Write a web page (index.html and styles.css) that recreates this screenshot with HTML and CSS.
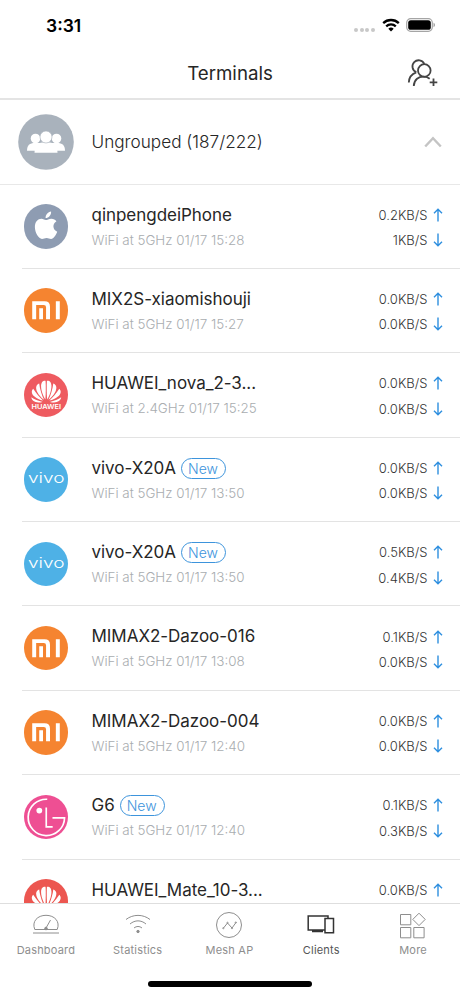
FILE: index.html
```html
<!DOCTYPE html>
<html lang="en">

<head>
    <meta charset="UTF-8">
    <meta name="viewport" content="width=device-width, initial-scale=1.0">
    <title>Terminals</title>
    <link rel="stylesheet" href="styles.css">
</head>

<body>
    <!-- shared icons -->
    <svg class="sprite" width="0" height="0">
        <symbol id="apple" viewBox="0 0 45 45">
            <path d="M22 16.300c1.500 0 3-1.500 5.700-1.500 2.200 0 4 1.100 5.100 2.700-4.500 2.700-3.800 8.700.8 10.500-1.300 3.400-3.600 7.300-6.200 7.300-1.800 0-2.500-1-4.500-1s-3 1-4.700 1c-3.400 0-7.200-6.500-7.200-12 0-5.200 3.100-8.300 6.600-8.300 2 0 3.300 1.300 4.400 1.300z" />
            <path d="M21.800 14.200c-.2-3.200 2.300-6.300 5.600-6.700.3 3.500-2.400 6.600-5.600 6.700z" />
        </symbol>
        <symbol id="mi" viewBox="0 0 45 45">
            <path d="M8.300 13.500h12.500q5.500 0 5.500 5.500v12.700h-4V19.500q0-2.300-2.300-2.300H12.300v14.500h-4z" />
            <path d="M15.400 20.500h3.800v11.200h-3.800zM32.200 13.500h4v18.200h-4z" />
        </symbol>
        <symbol id="huawei" viewBox="0 0 45 45">
            <g id="petals">
                <path d="M21.600 26.800C17.800 20.500 16 12.500 18.200 9.300c1-1.200 2.700-1.700 3.600-1.300.3 3 .3 13-.2 18.800z" />
                <path d="M20.300 27.100C14.500 22.500 11 16.500 12.700 12.800c.6-1.200 1.800-1.900 2.700-2.200.6 5.500 2.600 12 4.900 16.500z" />
                <path d="M19.300 27.900C12.500 26 7.700 22.500 7.900 18.900c0-1.300.8-2.400 1.400-3C12.200 20.500 16 24.800 19.300 27.900z" />
                <path d="M18.800 29.200c-6.500 1.600-10.700-.4-11.400-4.600C10.300 26.500 14.500 28.300 18.800 29.200z" />
            </g>
            <use href="#petals" transform="matrix(-1 0 0 1 45 0)" />
        </symbol>
        <symbol id="lg" viewBox="0 0 45 45">
            <circle cx="15.500" cy="15.800" r="2.900" />
            <path class="line" d="M23.500 4.300A18.400 18.400 0 1 0 41 23.200H28.800M22.500 12.700v19.500h6.500" />
        </symbol>
        <symbol id="up" viewBox="0 0 10 14">
            <path d="M5 13.500V1.200M1 5.200l4-4 4 4" />
        </symbol>
        <symbol id="down" viewBox="0 0 10 14">
            <path d="M5 .5v12.300M1 8.800l4 4 4-4" />
        </symbol>
    </svg>

    <div class="screen">
        <div class="status-bar">
            <span class="time">3:31</span>
            <div class="status-icons">
                <div class="signal"><i></i><i></i><i></i><i></i></div>
                <svg class="wifi" width="18" height="14" viewBox="0 0 18 14">
                    <path d="M1.200 5.100a11.300 11.300 0 0 1 15.600 0M4.200 8.300a7 7 0 0 1 9.600 0" />
                    <path class="dot" d="M9 13.500l-2.700-2.700a3.900 3.900 0 0 1 5.400 0z" />
                </svg>
                <svg width="30" height="14" viewBox="0 0 30 14">
                    <rect x=".7" y=".7" width="25.600" height="12.600" rx="4" fill="none" stroke="#a5a5a5" stroke-width="1.200" />
                    <rect x="2.200" y="2.200" width="22.600" height="9.600" rx="2.600" />
                    <path d="M27.500 4.800c2 .7 2 3.700 0 4.400z" fill="#a5a5a5" />
                </svg>
            </div>
        </div>

        <div class="header">
            <h1>Terminals</h1>
            <svg class="add-user" width="32" height="30" viewBox="0 0 32 30">
                <circle cx="17.300" cy="12.500" r="6.300" />
                <path d="M9.300 14.200A6.200 6.200 0 1 1 17.300 5.900M1.800 24.500c.1-4.500 2.800-8.500 7.500-10.200" />
                <path d="M6.800 28c.2-6.500 4.800-9.800 10.700-9.300 2.100.1 3.600.9 5.200 2.100M26.500 20.500v7.500M22.700 24.300h7.600" />
            </svg>
        </div>

        <div class="list">
            <div class="group">
                <svg class="group-icon" width="56" height="56" viewBox="0 0 56 56">
                    <circle cx="28" cy="28" r="27.800" fill="#a9b2bc" />
                    <g fill="#fff">
                        <circle cx="17.500" cy="24.500" r="4.800" />
                        <circle cx="38.500" cy="24.500" r="4.800" />
                        <path d="M9 36.800c0-5.500 2.500-7.800 8-7.800h22c5.500 0 8 2.300 8 7.800z" />
                        <path d="M16.500 38.800c0-7 3-10 8-10.300h7c5 .3 8 3.300 8 10.300z" />
                        <circle cx="28" cy="23" r="6" stroke="#a9b2bc" stroke-width=".6" />
                    </g>
                </svg>
                <span class="group-name">Ungrouped (187/222)</span>
                <svg class="chevron" width="18" height="12" viewBox="0 0 18 12">
                    <path d="M1.200 10.500L9 2.200l7.800 8.300" />
                </svg>
            </div>

            <div class="client">
                <svg class="logo apple"><use href="#apple" /></svg>
                <div class="info">
                    <div class="name">qinpengdeiPhone</div>
                    <div class="detail">WiFi at 5GHz 01/17 15:28</div>
                </div>
                <div class="speed">
                    <div>0.2KB/S <svg><use href="#up" /></svg></div>
                    <div>1KB/S <svg><use href="#down" /></svg></div>
                </div>
            </div>
            <div class="client">
                <svg class="logo mi"><use href="#mi" /></svg>
                <div class="info">
                    <div class="name">MIX2S-xiaomishouji</div>
                    <div class="detail">WiFi at 5GHz 01/17 15:27</div>
                </div>
                <div class="speed">
                    <div>0.0KB/S <svg><use href="#up" /></svg></div>
                    <div>0.0KB/S <svg><use href="#down" /></svg></div>
                </div>
            </div>
            <div class="client">
                <svg class="logo huawei" viewBox="0 0 45 45">
                    <use href="#huawei" />
                    <text x="7.500" y="36.700" textLength="30" lengthAdjust="spacingAndGlyphs">HUAWEI</text>
                </svg>
                <div class="info">
                    <div class="name">HUAWEI_nova_2-3...</div>
                    <div class="detail">WiFi at 2.4GHz 01/17 15:25</div>
                </div>
                <div class="speed">
                    <div>0.0KB/S <svg><use href="#up" /></svg></div>
                    <div>0.0KB/S <svg><use href="#down" /></svg></div>
                </div>
            </div>
            <div class="client">
                <svg class="logo vivo" viewBox="0 0 45 45">
                    <text x="4" y="26.500" textLength="37" lengthAdjust="spacingAndGlyphs">vivo</text>
                </svg>
                <div class="info">
                    <div class="name">vivo-X20A <span class="new">New</span></div>
                    <div class="detail">WiFi at 5GHz 01/17 13:50</div>
                </div>
                <div class="speed">
                    <div>0.0KB/S <svg><use href="#up" /></svg></div>
                    <div>0.0KB/S <svg><use href="#down" /></svg></div>
                </div>
            </div>
            <div class="client">
                <svg class="logo vivo" viewBox="0 0 45 45">
                    <text x="4" y="26.500" textLength="37" lengthAdjust="spacingAndGlyphs">vivo</text>
                </svg>
                <div class="info">
                    <div class="name">vivo-X20A <span class="new">New</span></div>
                    <div class="detail">WiFi at 5GHz 01/17 13:50</div>
                </div>
                <div class="speed">
                    <div>0.5KB/S <svg><use href="#up" /></svg></div>
                    <div>0.4KB/S <svg><use href="#down" /></svg></div>
                </div>
            </div>
            <div class="client">
                <svg class="logo mi"><use href="#mi" /></svg>
                <div class="info">
                    <div class="name">MIMAX2-Dazoo-016</div>
                    <div class="detail">WiFi at 5GHz 01/17 13:08</div>
                </div>
                <div class="speed">
                    <div>0.1KB/S <svg><use href="#up" /></svg></div>
                    <div>0.0KB/S <svg><use href="#down" /></svg></div>
                </div>
            </div>
            <div class="client">
                <svg class="logo mi"><use href="#mi" /></svg>
                <div class="info">
                    <div class="name">MIMAX2-Dazoo-004</div>
                    <div class="detail">WiFi at 5GHz 01/17 12:40</div>
                </div>
                <div class="speed">
                    <div>0.0KB/S <svg><use href="#up" /></svg></div>
                    <div>0.0KB/S <svg><use href="#down" /></svg></div>
                </div>
            </div>
            <div class="client">
                <svg class="logo lg"><use href="#lg" /></svg>
                <div class="info">
                    <div class="name">G6 <span class="new">New</span></div>
                    <div class="detail">WiFi at 5GHz 01/17 12:40</div>
                </div>
                <div class="speed">
                    <div>0.1KB/S <svg><use href="#up" /></svg></div>
                    <div>0.3KB/S <svg><use href="#down" /></svg></div>
                </div>
            </div>
            <div class="client">
                <svg class="logo huawei mate"><use href="#huawei" /></svg>
                <div class="info">
                    <div class="name">HUAWEI_Mate_10-3...</div>
                </div>
                <div class="speed">
                    <div>0.0KB/S <svg><use href="#up" /></svg></div>
                </div>
            </div>
        </div>

        <div class="tab-bar">
            <div class="tab">
                <svg width="28" height="28" viewBox="0 0 28 28">
                    <path d="M2.800 18.500C-.5 10.500 5.500 4.300 14 4.300s14.500 6.200 11.200 14.200zM1 22h26M14.300 16.500l4.200-7.500" />
                    <circle cx="14" cy="17.500" r="1.300" fill="#8e8e8e" />
                </svg>
                <span>Dashboard</span>
            </div>
            <div class="tab">
                <svg width="28" height="28" viewBox="0 0 28 28">
                    <path d="M2 8.500c7-5.500 17-5.500 24 0M6 13c5-4.200 11-4.200 16 0M10 17c2.500-2 5.500-2 8 0" />
                    <circle cx="14" cy="20.500" r="1.200" fill="#8e8e8e" />
                </svg>
                <span>Statistics</span>
            </div>
            <div class="tab">
                <svg width="28" height="28" viewBox="0 0 28 28">
                    <circle cx="14" cy="14" r="12.500" />
                    <path d="M8.500 17l4-5 4.500 5 4-5.500" />
                    <circle cx="8.300" cy="17.200" r=".6" />
                    <circle cx="12.500" cy="11.800" r=".6" />
                    <circle cx="17" cy="17.200" r=".6" />
                    <circle cx="20.800" cy="11.500" r=".6" />
                </svg>
                <span>Mesh AP</span>
            </div>
            <div class="tab active">
                <svg width="28" height="28" viewBox="0 0 28 28">
                    <path d="M21 7.500V5H1.200v14h16.300M5 20.600h11M18 7.500h8.500v14.200H18z" />
                </svg>
                <span>Clients</span>
            </div>
            <div class="tab">
                <svg width="28" height="28" viewBox="0 0 28 28">
                    <path d="M1.500 3.500h10.300v10.300H1.500zM1.500 16.500h10.300v10.300H1.500zM14.800 16.500h10.300v10.300H14.800zM20 2.200l6.200 6.200-6.200 6.200-6.200-6.200z" />
                </svg>
                <span>More</span>
            </div>
        </div>
        <div class="home-indicator"></div>
    </div>
</body>

</html>
```
FILE: styles.css
```css
* {
    box-sizing: border-box;
}

body {
    margin: 0;
    font-family: Inter, "Liberation Sans", sans-serif;
    background-color: #fff;
    color: #262626;
}

.sprite {
    display: block;
}

.screen {
    width: 460px;
    height: 996px;
    display: flex;
    flex-direction: column;
    overflow: hidden;
}

.status-bar {
    height: 49px;
    padding: 1px 24.5px 0 46px;
    display: flex;
    align-items: center;
    justify-content: space-between;
    flex-shrink: 0;
}

.time {
    font-size: 17.5px;
    font-weight: 600;
    color: #000;
}

.status-icons {
    display: flex;
    align-items: center;
}

.signal {
    display: flex;
    gap: 1.5px;
    margin: 9px 7px 0 0;
}

.signal i {
    width: 4px;
    height: 4px;
    border-radius: 50%;
    background-color: #c8c8c8;
}

.wifi {
    margin-right: 6px;
    fill: none;
    stroke: #000;
    stroke-width: 2.3;
}

.wifi .dot {
    fill: #000;
    stroke: none;
}

.header {
    height: 50.5px;
    flex-shrink: 0;
    border-bottom: 2px solid #e4e4e4;
    display: grid;
    grid-template-columns: 60px 1fr 60px;
    align-items: center;
}

.header h1 {
    grid-column: 2;
    margin: 0;
    font-size: 18.7px;
    font-weight: 400;
    text-align: center;
}

.add-user {
    margin-left: 7px;
    fill: none;
    stroke: #444;
    stroke-width: 1.8;
}

.list {
    flex: 1;
    min-height: 0;
    overflow: hidden;
}

.group {
    height: 85px;
    padding: 0 18px;
    display: flex;
    align-items: center;
    border-bottom: 1px solid #e8e8e8;
}

.group-icon {
    margin-right: 17.5px;
}

.group-name {
    flex: 1;
    font-size: 17.2px;
    font-weight: 300;
}

.chevron {
    fill: none;
    stroke: #c4c4c4;
    stroke-width: 2.4;
}

.client {
    height: 84.4px;
    margin-left: 22px;
    padding: 0 17.5px 0 1.5px;
    display: flex;
    border-bottom: 1px solid #e3e3e3;
}

.logo {
    width: 44.5px;
    height: 44.5px;
    margin: 19.5px 23.5px 0 0;
    border-radius: 50%;
    fill: #fff;
    flex-shrink: 0;
}

.apple {
    background-color: #8e9cb2;
}

.mi {
    background-color: #f58430;
}

.huawei {
    background-color: #ee5b60;
    font-size: 6.3px;
    font-weight: 600;
}

.huawei.mate {
    background-color: #ec5650;
}

.vivo {
    background-color: #4eb1e6;
    font-size: 14px;
    font-weight: 300;
}

.lg {
    background-color: #ee4f93;
}

.line {
    fill: none;
    stroke: #fff;
    stroke-width: 1.7;
}

.info {
    flex: 1;
    padding-top: 18px;
    white-space: nowrap;
}

.name {
    height: 25px;
    display: flex;
    align-items: center;
    font-size: 17px;
    letter-spacing: -0.03px;
    line-height: 25px;
}

.new {
    height: 21px;
    width: 45px;
    margin-left: 5.5px;
    border: 1.3px solid #3d94dc;
    border-radius: 11px;
    color: #3d94dc;
    font-size: 14px;
    font-weight: 300;
    line-height: 19px;
    text-align: center;
    text-indent: -2px;
}

.detail {
    font-size: 13.4px;
    font-weight: 300;
    line-height: 25px;
    color: #a9adb0;
}

.speed {
    padding-top: 17.5px;
    font-size: 13px;
    font-weight: 300;
    color: #333;
}

.speed div {
    height: 25.3px;
    display: flex;
    align-items: center;
    justify-content: flex-end;
}

.speed svg {
    width: 10px;
    height: 14px;
    margin-left: 5px;
    fill: none;
    stroke: #2e8fdf;
    stroke-width: 1.4;
}

.tab-bar {
    height: 64px;
    flex-shrink: 0;
    padding: 7px 1px 0 0;
    border-top: 1px solid #dedede;
    display: grid;
    grid-template-columns: repeat(5, 1fr);
}

.tab {
    display: flex;
    flex-direction: column;
    align-items: center;
    gap: 4px;
    font-size: 11px;
    letter-spacing: 0.2px;
    color: #8e8e8e;
}

.tab svg {
    fill: none;
    stroke: #8e8e8e;
    stroke-width: 1;
}

.tab.active {
    color: #555;
}

.tab.active svg {
    stroke: #333;
    stroke-width: 1.5;
}

.home-indicator {
    width: 164px;
    height: 6px;
    margin: 14px auto 9px;
    border-radius: 3px;
    background-color: #000;
    flex-shrink: 0;
}
```
